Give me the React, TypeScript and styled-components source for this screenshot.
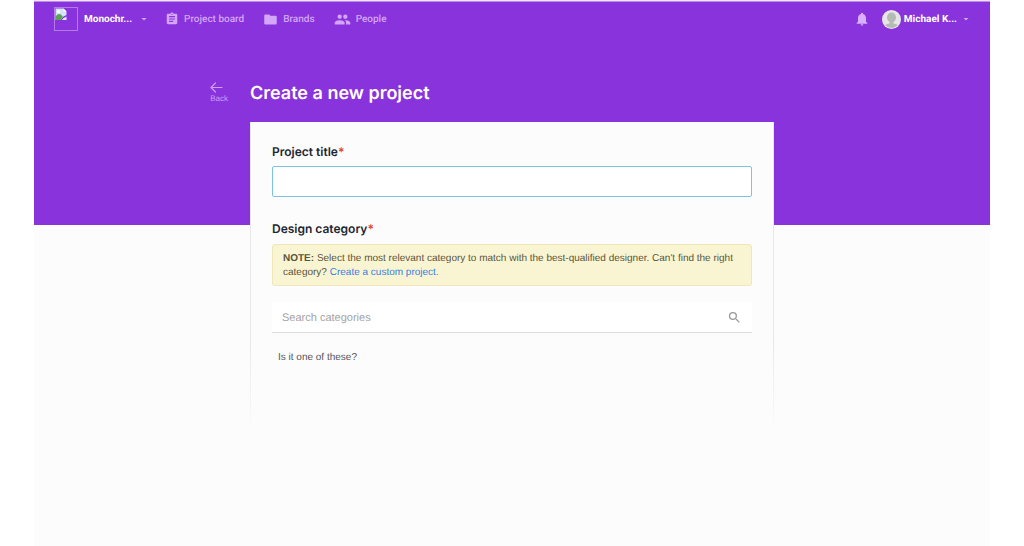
import React from 'react';
import styled, { createGlobalStyle } from 'styled-components';
import { MdArrowDropDown, MdAssignment, MdFolder, MdGroup, MdNotifications, MdSearch } from 'react-icons/md';

const GlobalStyle = createGlobalStyle`
  *, *::before, *::after { box-sizing: border-box; }
  body { margin: 0; background: #fff; text-rendering: geometricPrecision; }
  button, input { font: inherit; text-rendering: inherit; }
`;

const display = "'Inter', 'Liberation Sans', sans-serif";
const compact = "'Roboto', 'Liberation Sans', sans-serif";
const text = "'Liberation Sans', Arial, sans-serif";

const Page = styled.div`
  display: flex;
  flex-direction: column;
  min-height: 100vh;
  margin: 0 34px;
  padding-top: 2px;
  background: linear-gradient(#f1e6fb 1px, #8933dc 2px, #8933dc 225px, #fcfcfc 225px);
  font-family: ${text};
`;

const TopBar = styled.header`
  display: flex;
  align-items: center;
  justify-content: space-between;
  height: 34px;
  padding: 0 18px 0 20px;
  font-family: ${compact};
`;

const Group = styled.div<{ $gap: number }>`
  display: flex;
  align-items: center;
  gap: ${(p) => p.$gap}px;
`;

const Nav = styled.nav`
  display: flex;
  align-items: center;
  gap: 19px;
`;

const NavLink = styled.a`
  display: flex;
  align-items: center;
  gap: 5px;
  color: #d3a6f8;
  font-size: 10px;
  font-weight: 500;
  line-height: 14px;
  text-decoration: none;
  white-space: nowrap;
`;

const BarText = styled.span`
  padding-top: 2px;
`;

const MenuButton = styled.button<{ $gap: number }>`
  display: flex;
  align-items: center;
  gap: ${(p) => p.$gap}px;
  padding: 0;
  border: 0;
  background: none;
  color: #fff;
  font-size: 10px;
  font-weight: 700;
  line-height: 14px;
  cursor: pointer;
`;

const Caret = styled(MdArrowDropDown)`
  color: #d3a6f8;
`;

const IconButton = styled.button`
  display: flex;
  padding: 0;
  border: 0;
  background: none;
  color: #d9b0fb;
  cursor: pointer;
`;

const Columns = styled.div`
  display: grid;
  grid-template-columns: minmax(0, 1fr) minmax(0, 524px) minmax(0, 1fr);
`;

const TitleRow = styled(Columns)`
  align-items: center;
  height: 86px;
  padding-top: 30px;
`;

const BackLink = styled.a`
  display: flex;
  flex-direction: column;
  justify-self: end;
  gap: 2px;
  margin: 0 22px 4px 0;
  color: #cf9df6;
  font-size: 8px;
  line-height: 8px;
  text-decoration: none;
`;

const Title = styled.h1`
  margin: 0;
  color: #fff;
  font-family: ${display};
  font-size: 18px;
  font-weight: 600;
  line-height: 24px;
`;

const Card = styled.form`
  grid-column: 2;
  height: 311px;
  padding: 20px 21px;
  border: 1px solid;
  border-width: 0 1px;
  border-image: linear-gradient(#e8e8ea 70%, #fcfcfc) 1;
  background: #fcfcfc;
`;

const Label = styled.label`
  display: block;
  color: #1c2733;
  font-family: ${display};
  font-size: 12px;
  font-weight: 600;
  line-height: 20px;
`;

const Required = styled.span`
  color: #e0443e;
`;

const TitleInput = styled.input`
  display: block;
  width: 100%;
  height: 31px;
  margin: 4px 0 22px;
  padding: 0 10px;
  border: 1px solid #7cc4dc;
  border-radius: 2px;
  outline: 0;
  background: #fff;
  color: #333;
  font-size: 11px;
`;

const Note = styled.p`
  margin: 5px 0 16px;
  padding: 7px 10px 5px;
  border: 1px solid #efe7b5;
  border-radius: 3px;
  background: #f9f5d3;
  color: #59553a;
  font-size: 10px;
  line-height: 14px;
`;

const NoteLink = styled.a`
  color: #3b7de0;
  text-decoration: none;
`;

const SearchBox = styled.div`
  display: flex;
  align-items: center;
  height: 31px;
  padding: 0 10px;
  border-bottom: 1px solid #dcdcdc;
  background: #fff;
  color: #999;
`;

const SearchInput = styled.input`
  flex: 1;
  min-width: 0;
  padding: 1px 0 0;
  border: 0;
  outline: 0;
  background: none;
  color: #333;
  font-size: 11px;
  &::placeholder { color: #a3a3a3; opacity: 1; }
`;

const Hint = styled.p`
  margin: 18px 6px 0;
  color: #555;
  font-size: 10px;
  line-height: 14px;
`;

function BrokenImage() {
  return (
    <svg width="24" height="24" viewBox="0 0 24 24" aria-hidden="true">
      <rect x=".5" y=".5" width="23" height="23" fill="none" stroke="#b27be6" />
      <path d="M1.500 1.500h8l3 3v3.500l-3 1.500-3 3.500h-5z" fill="#d5e3f6" />
      <path d="M9.500 1.500v3h3z" fill="#fff" />
      <path d="M1.500 9.500q3-4 6-1.500l1.500 2-2.500 3h-5z" fill="#5da05a" />
      <path d="M9 11.500l3.500-2v3.500H8z" fill="#e6edf8" />
      <circle cx="4.500" cy="4.500" r="1.500" fill="#fff" />
    </svg>
  );
}

function Avatar() {
  return (
    <svg width="19" height="19" viewBox="0 0 19 19" aria-hidden="true">
      <clipPath id="avatar"><circle cx="9.500" cy="9.500" r="8.500" /></clipPath>
      <circle cx="9.500" cy="9.500" r="9.500" fill="#e6e6e6" />
      <g clipPath="url(#avatar)" fill="#b5bab5">
        <ellipse cx="9.500" cy="7.500" rx="4.500" ry="5" />
        <path d="M7.500 11h4v2.500q5 .8 5.500 3.500v2H2v-2q.5-2.700 5.500-3.500z" />
      </g>
    </svg>
  );
}

function BackArrow() {
  return (
    <svg width="13" height="11" viewBox="0 0 13 11" fill="none" stroke="currentColor" strokeWidth="1.200" strokeLinecap="round" strokeLinejoin="round" aria-hidden="true">
      <path d="M12 5.500H1M5.500 1L1 5.500 5.500 10" />
    </svg>
  );
}

export default function App() {
  return (
    <>
      <GlobalStyle />
      <Page>
        <TopBar>
          <Group $gap={15}>
            <MenuButton type="button" $gap={6}>
              <BrokenImage />
              <BarText>Monochr...</BarText>
              <Caret size={12} />
            </MenuButton>
            <Nav>
              <NavLink href="#board"><MdAssignment size={14} /><BarText>Project board</BarText></NavLink>
              <NavLink href="#brands"><MdFolder size={15} /><BarText>Brands</BarText></NavLink>
              <NavLink href="#people"><MdGroup size={17} /><BarText>People</BarText></NavLink>
            </Nav>
          </Group>
          <Group $gap={12}>
            <IconButton type="button" aria-label="Notifications"><MdNotifications size={16} /></IconButton>
            <MenuButton type="button" $gap={3}>
              <Avatar />
              <BarText>Michael K...</BarText>
              <Caret size={12} />
            </MenuButton>
          </Group>
        </TopBar>
        <main>
          <TitleRow>
            <BackLink href="#back"><BackArrow />Back</BackLink>
            <Title>Create a new project</Title>
          </TitleRow>
          <Columns>
            <Card>
              <Label htmlFor="title">Project title<Required>*</Required></Label>
              <TitleInput id="title" type="text" />
              <Label htmlFor="category">Design category<Required>*</Required></Label>
              <Note>
                <strong>NOTE:</strong> Select the most relevant category to match with the best-qualified designer. Can't find the right
                category? <NoteLink href="#custom">Create a custom project.</NoteLink>
              </Note>
              <SearchBox>
                <SearchInput id="category" type="text" placeholder="Search categories" />
                <MdSearch size={15} />
              </SearchBox>
              <Hint>Is it one of these?</Hint>
            </Card>
          </Columns>
        </main>
      </Page>
    </>
  );
}
